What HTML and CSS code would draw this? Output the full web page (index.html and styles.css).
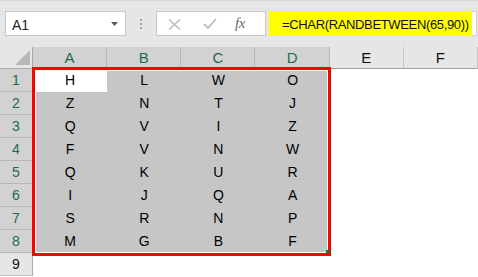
FILE: index.html
```html
<!DOCTYPE html>
<html>
<head>
<meta charset="utf-8">
<link rel="stylesheet" href="styles.css">
</head>
<body>
<div class="app">
  <div class="bar">
    <div class="namebox">
      <span class="ref">A1</span>
      <svg class="arrow" width="7" height="4" viewBox="0 0 7 4"><path d="M0 0H7L3.5 4Z" fill="#5a5a5a"/></svg>
    </div>
    <div class="grip"><i></i><i></i><i></i></div>
    <div class="fxbox">
      <svg class="ico-x" width="13" height="11" viewBox="0 0 13 11"><path d="M1 0.5L12 10.5M12 0.5L1 10.5" stroke="#bdbdbd" stroke-width="1.6" fill="none"/></svg>
      <svg class="ico-ok" width="14" height="11" viewBox="0 0 14 11"><path d="M1 6L5 10L13 1" stroke="#bdbdbd" stroke-width="1.8" fill="none"/></svg>
      <span class="fx">fx</span>
    </div>
    <div class="input"><span class="hl">=CHAR(RANDBETWEEN(65,90))</span></div>
  </div>

  <div class="grid">
    <div class="corner"><svg width="15" height="15" viewBox="0 0 15 15"><path d="M15 0V15H0Z" fill="#b8b8b8"/></svg></div>
    <div class="ch on">A</div><div class="ch on">B</div><div class="ch on">C</div><div class="ch on">D</div><div class="ch">E</div><div class="ch">F</div>

    <div class="rh on">1</div><div class="c act">H</div><div class="c s">L</div><div class="c s">W</div><div class="c s">O</div><div class="c"></div><div class="c"></div>
    <div class="rh on">2</div><div class="c s">Z</div><div class="c s">N</div><div class="c s">T</div><div class="c s">J</div><div class="c"></div><div class="c"></div>
    <div class="rh on">3</div><div class="c s">Q</div><div class="c s">V</div><div class="c s">I</div><div class="c s">Z</div><div class="c"></div><div class="c"></div>
    <div class="rh on">4</div><div class="c s">F</div><div class="c s">V</div><div class="c s">N</div><div class="c s">W</div><div class="c"></div><div class="c"></div>
    <div class="rh on">5</div><div class="c s">Q</div><div class="c s">K</div><div class="c s">U</div><div class="c s">R</div><div class="c"></div><div class="c"></div>
    <div class="rh on">6</div><div class="c s">I</div><div class="c s">J</div><div class="c s">Q</div><div class="c s">A</div><div class="c"></div><div class="c"></div>
    <div class="rh on">7</div><div class="c s">S</div><div class="c s">R</div><div class="c s">N</div><div class="c s">P</div><div class="c"></div><div class="c"></div>
    <div class="rh on">8</div><div class="c s">M</div><div class="c s">G</div><div class="c s">B</div><div class="c s">F</div><div class="c"></div><div class="c"></div>
    <div class="rh">9</div><div class="c"></div><div class="c"></div><div class="c"></div><div class="c"></div><div class="c"></div><div class="c"></div>
  </div>

  <div class="handle"></div>
  <div class="mark"></div>
</div>
</body>
</html>
```

FILE: styles.css
```css
* { box-sizing: border-box; }
html, body { margin: 0; padding: 0; }
body {
  width: 478px;
  height: 277px;
  overflow: hidden;
  background: #ffffff;
  font-family: "Liberation Sans", Arial, sans-serif;
}
.app {
  position: relative;
  width: 478px;
  height: 277px;
}

/* formula bar */
.bar {
  height: 47px;
  background: #e6e6e6;
  border-top: 1px solid #d6d6d6;
  display: flex;
  align-items: flex-start;
  padding-top: 10px;
}
.namebox {
  margin-left: 5px;
  width: 121px;
  height: 25px;
  background: #fff;
  border: 1px solid #c8c8c8;
  display: flex;
  align-items: center;
  padding: 0 7px 0 6px;
}
.ref {
  font-size: 14px;
  color: #222;
  padding-top: 2px;
}
.arrow { margin-left: auto; }
.grip {
  margin-left: 14px;
  margin-top: 8px;
  width: 2px;
  display: flex;
  flex-direction: column;
  gap: 2px;
}
.grip i {
  display: block;
  width: 2px;
  height: 2px;
  background: #a3a3a3;
}
.fxbox {
  margin-left: 14px;
  width: 110px;
  height: 25px;
  background: #fff;
  border: 1px solid #c8c8c8;
  display: flex;
  align-items: center;
  padding-left: 11px;
}
.ico-x { margin-top: 1px; }
.ico-ok { margin-left: 22px; }
.fx {
  margin-left: 18px;
  font-family: "Liberation Serif", "Times New Roman", serif;
  font-style: italic;
  font-size: 15px;
  color: #6e6e6e;
  letter-spacing: -0.5px;
}
.input {
  margin-left: 3px;
  width: 208px;
  height: 25px;
  background: #fff;
  border: 1px solid #d0d0d0;
  border-left: none;
}
.hl {
  display: block;
  width: 203px;
  height: 25px;
  margin-top: -1px;
  background: #ffff00;
  font-size: 13px;
  letter-spacing: -0.35px;
  line-height: 27px;
  padding-left: 13px;
  color: #111;
  white-space: nowrap;
}

/* grid */
.grid {
  display: grid;
  grid-template-columns: 33px repeat(6, 1fr);
  grid-template-rows: 22px repeat(9, 23px);
}
.corner {
  background: #e6e6e6;
  border-right: 1px solid #ababab;
  border-bottom: 1px solid #ababab;
  display: flex;
  align-items: flex-end;
  justify-content: flex-end;
  padding: 0 2px 3px 0;
}
.ch {
  background: #e6e6e6;
  border-right: 1px solid #c4c4c4;
  border-bottom: 1px solid #9e9e9e;
  text-align: center;
  font-size: 15px;
  line-height: 22px;
  color: #111;
}
.ch.on { background: #d2d2d2; color: #1d6b4f; border-right-color: #b8b8b8; }
.rh {
  background: #e6e6e6;
  border-right: 1px solid #ababab;
  border-bottom: 1px solid #c4c4c4;
  text-align: center;
  font-size: 14px;
  line-height: 23px;
  color: #111;
}
.rh.on { background: #d2d2d2; color: #1d6b4f; border-bottom-color: #b8b8b8; }
.c {
  background: #fff;
  text-align: center;
  font-size: 14px;
  line-height: 23px;
  color: #000;
}
.c.s { background: #c6c6c6; }

/* overlays */
.mark {
  position: absolute;
  left: 32px;
  top: 67px;
  width: 299px;
  height: 189px;
  border: 3px solid #ff0000;
  box-shadow: inset 0 0 0 1px #ffffff;
}
.handle {
  position: absolute;
  left: 326px;
  top: 250px;
  width: 3px;
  height: 3px;
  background: #217346;
  z-index: 2;
}
```
